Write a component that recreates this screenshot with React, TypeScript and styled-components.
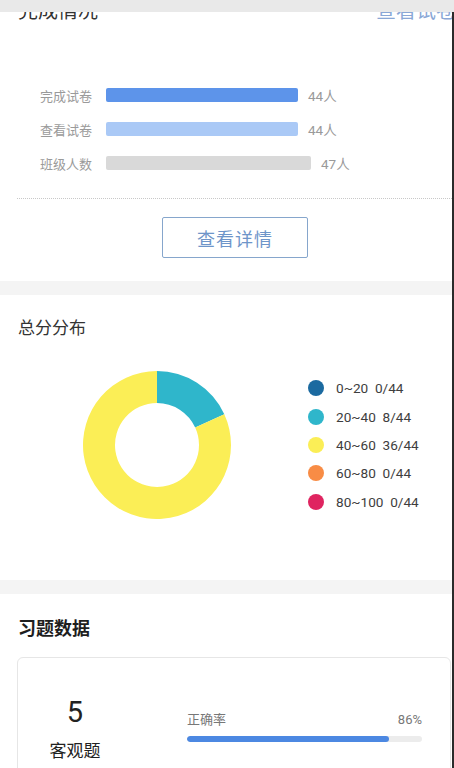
import React from 'react';
import styled, { createGlobalStyle } from 'styled-components';

const GlobalStyle = createGlobalStyle`
  html, body {
    margin: 0;
    padding: 0;
    background: #ffffff;
  }
  body {
    font-family: Roboto, "Noto Sans CJK SC", sans-serif;
    color: #333;
  }
`;

const Page = styled.div`
  width: 452px;
  min-height: 768px;
  border-right: 2px solid #2b2b2b;
  overflow: hidden;
  background: #f4f4f4;
`;

const TopBar = styled.div`
  position: fixed;
  top: 0;
  left: 0;
  width: 454px;
  height: 12px;
  background: #e9e9e9;
  z-index: 10;
`;

const Section = styled.section<{ $padTop?: number; $padBottom?: number }>`
  background: #fff;
  padding-top: ${(p) => p.$padTop ?? 0}px;
  padding-bottom: ${(p) => p.$padBottom ?? 0}px;
  margin-bottom: 14px;
  &:last-child {
    margin-bottom: 0;
  }
`;

const HeaderRow = styled.div`
  display: flex;
  justify-content: space-between;
  align-items: flex-start;
  height: 34px;
  padding-left: 18px;
  white-space: nowrap;
  line-height: 22px;
`;

const HeaderTitle = styled.span`
  font-size: 20px;
  color: #333;
`;

const HeaderLink = styled.span`
  font-size: 20px;
  color: #8aa7d6;
  margin-right: -4px;
`;

const BarList = styled.div`
  display: flex;
  flex-direction: column;
  padding: 44px 0 0 40px;
`;

const BarRow = styled.div`
  display: flex;
  align-items: center;
  height: 34px;
`;

const BarLabel = styled.span`
  width: 66px;
  font-size: 13px;
  color: #9a9a9a;
`;

const Bar = styled.div<{ $color: string; $width: number }>`
  width: ${(p) => p.$width}px;
  height: 14px;
  border-radius: 2px;
  background: ${(p) => p.$color};
`;

const BarValue = styled.span`
  margin-left: 10px;
  font-size: 13.5px;
  color: #9a9a9a;
`;

const DottedLine = styled.div`
  margin: 18px 0 18px 17px;
  border-top: 1px dotted #c8c8c8;
`;

const ButtonWrap = styled.div`
  display: flex;
  justify-content: center;
  padding-left: 18px;
`;

const OutlineButton = styled.button`
  width: 146px;
  height: 41px;
  border: 1px solid #86a6cc;
  border-radius: 2px;
  background: #fff;
  color: #6e95c9;
  font-family: "Noto Sans CJK SC", sans-serif;
  font-size: 18px;
  letter-spacing: 1px;
  cursor: pointer;
`;

const SectionTitle = styled.h2<{ $bold?: boolean }>`
  margin: 0;
  padding-left: 18px;
  font-size: ${(p) => (p.$bold ? 18 : 17)}px;
  line-height: ${(p) => (p.$bold ? 26 : 24)}px;
  font-weight: ${(p) => (p.$bold ? 700 : 400)};
  color: ${(p) => (p.$bold ? '#1e1e1e' : '#333')};
  font-family: "Noto Sans CJK SC", sans-serif;
`;

const ChartRow = styled.div`
  display: flex;
  align-items: center;
  padding: 32px 0 0 83px;
`;

const Legend = styled.ul`
  list-style: none;
  margin: 0 0 0 77px;
  padding: 0;
`;

const LegendItem = styled.li`
  display: flex;
  align-items: center;
  height: 28.3px;
  font-size: 13.6px;
  color: #3e3e3e;
  white-space: pre;
`;

const Dot = styled.span<{ $color: string }>`
  width: 16px;
  height: 16px;
  border-radius: 50%;
  background: ${(p) => p.$color};
  margin-right: 12px;
`;

const Card = styled.div`
  display: flex;
  margin: 17px 1px 0 17px;
  height: 140px;
  border: 1px solid #e6e6e6;
  border-radius: 6px;
  background: #fff;
`;

const CountCol = styled.div`
  width: 114px;
  display: flex;
  flex-direction: column;
  align-items: center;
  padding-top: 37px;
`;

const Count = styled.span`
  font-size: 29px;
  line-height: 34px;
  color: #222;
`;

const CountLabel = styled.span`
  margin-top: 9px;
  font-size: 17px;
  line-height: 24px;
  color: #222;
  font-family: "Noto Sans CJK SC", sans-serif;
`;

const RateCol = styled.div`
  flex: 1;
  margin-left: 55px;
  margin-right: 28px;
  padding-top: 53px;
`;

const RateHead = styled.div`
  display: flex;
  justify-content: space-between;
  font-size: 13px;
  line-height: 18px;
  color: #777;
`;

const Track = styled.div`
  margin-top: 7px;
  height: 6px;
  border-radius: 3px;
  background: #ececec;
  overflow: hidden;
`;

const Fill = styled.div`
  height: 100%;
  border-radius: 3px;
  background: #4c88e2;
`;

const bars = [
  { label: '完成试卷', color: '#5d94ea', width: 192, value: '44人' },
  { label: '查看试卷', color: '#aac9f6', width: 192, value: '44人' },
  { label: '班级人数', color: '#d9d9d9', width: 205, value: '47人' },
];

const legend = [
  { range: '0~20', count: '0/44', color: '#1b6aa0', n: 0 },
  { range: '20~40', count: '8/44', color: '#2fb6cb', n: 8 },
  { range: '40~60', count: '36/44', color: '#fbee56', n: 36 },
  { range: '60~80', count: '0/44', color: '#f88c45', n: 0 },
  { range: '80~100', count: '0/44', color: '#df2460', n: 0 },
];

const Donut: React.FC = () => {
  const cx = 74;
  const cy = 74;
  const ro = 74;
  const ri = 42;
  const total = legend.reduce((s, l) => s + l.n, 0);
  let start = 0;
  const pt = (r: number, a: number) =>
    `${cx + r * Math.sin(a)} ${cy - r * Math.cos(a)}`;
  return (
    <svg width="148" height="148" viewBox="0 0 148 148">
      {legend
        .filter((l) => l.n > 0)
        .map((l) => {
          const a0 = start;
          const a1 = start + (l.n / total) * Math.PI * 2;
          start = a1;
          const large = a1 - a0 > Math.PI ? 1 : 0;
          const d = `M ${pt(ro, a0)} A ${ro} ${ro} 0 ${large} 1 ${pt(ro, a1)} L ${pt(
            ri,
            a1
          )} A ${ri} ${ri} 0 ${large} 0 ${pt(ri, a0)} Z`;
          return <path key={l.range} d={d} fill={l.color} />;
        })}
    </svg>
  );
};

export default function App() {
  return (
    <Page>
      <GlobalStyle />
      <TopBar />
      <Section $padBottom={23}>
        <HeaderRow>
          <HeaderTitle>完成情况</HeaderTitle>
          <HeaderLink>查看试卷</HeaderLink>
        </HeaderRow>
        <BarList>
          {bars.map((b) => (
            <BarRow key={b.label}>
              <BarLabel>{b.label}</BarLabel>
              <Bar $color={b.color} $width={b.width} />
              <BarValue>{b.value}</BarValue>
            </BarRow>
          ))}
        </BarList>
        <DottedLine />
        <ButtonWrap>
          <OutlineButton>查看详情</OutlineButton>
        </ButtonWrap>
      </Section>
      <Section $padTop={20} $padBottom={61}>
        <SectionTitle>总分分布</SectionTitle>
        <ChartRow>
          <Donut />
          <Legend>
            {legend.map((l) => (
              <LegendItem key={l.range}>
                <Dot $color={l.color} />
                {l.range}  {l.count}
              </LegendItem>
            ))}
          </Legend>
        </ChartRow>
      </Section>
      <Section $padTop={20} $padBottom={20}>
        <SectionTitle $bold>习题数据</SectionTitle>
        <Card>
          <CountCol>
            <Count>5</Count>
            <CountLabel>客观题</CountLabel>
          </CountCol>
          <RateCol>
            <RateHead>
              <span>正确率</span>
              <span>86%</span>
            </RateHead>
            <Track>
              <Fill style={{ width: '86%' }} />
            </Track>
          </RateCol>
        </Card>
      </Section>
    </Page>
  );
}
